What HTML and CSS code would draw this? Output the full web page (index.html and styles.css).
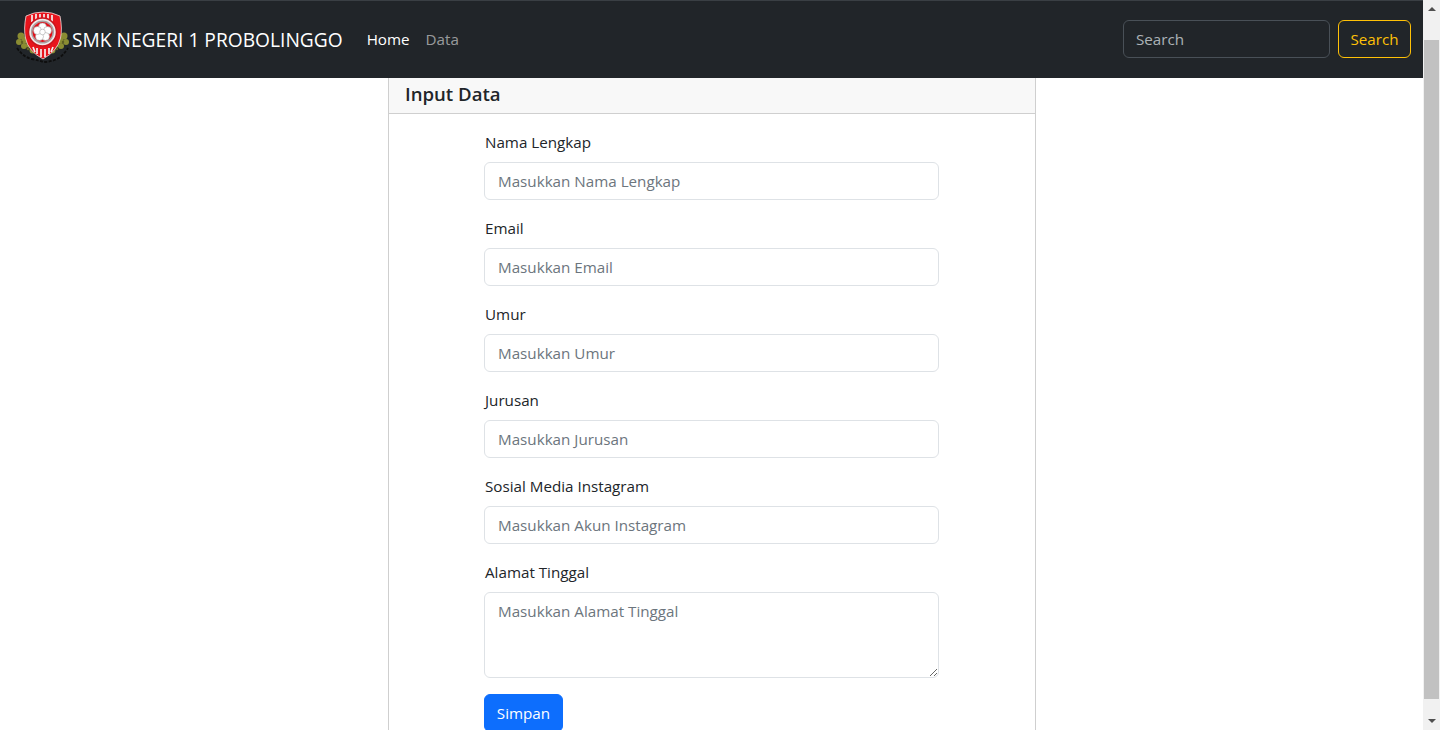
FILE: index.html
```html
<!DOCTYPE html>
<html lang="id">
<head>
<meta charset="utf-8">
<title>SMK Negeri 1 Probolinggo</title>
<link rel="stylesheet" href="styles.css">
</head>
<body>
<div class="viewport">
  <div class="page">
    <nav class="navbar">
      <a class="brand" href="#">
        <svg class="logo" viewBox="0 0 58 60" width="58" height="60" aria-hidden="true">
          <g fill="#8a8c32">
            <circle cx="7" cy="27" r="3.500"/><circle cx="11" cy="31" r="3.500"/><circle cx="5" cy="33" r="3"/><circle cx="10" cy="37" r="3"/><circle cx="15" cy="36" r="2.800"/><circle cx="19" cy="41" r="3.500"/>
            <circle cx="50" cy="27" r="3.500"/><circle cx="46" cy="31" r="3.500"/><circle cx="52" cy="33" r="3"/><circle cx="47" cy="37" r="3"/><circle cx="42" cy="36" r="2.800"/><circle cx="38" cy="41" r="3.500"/>
          </g>
          <g fill="#5f6022">
            <circle cx="8" cy="33" r="1.200"/><circle cx="49" cy="33" r="1.200"/><circle cx="14" cy="40" r="1.300"/><circle cx="43" cy="40" r="1.300"/>
          </g>
          <path d="M3 39q6 9 15 11t11 3q8 0 14-3t11-11" fill="none" stroke="#0e0e0e" stroke-width="1.800" stroke-dasharray="3 1.500"/>
          <path d="M12 7Q20 3 29 3t17 4q2.500 13 .5 22-3 13-17.500 21Q14 42 11.500 29 9.500 20 12 7Z" fill="#e8141c" stroke="#f0dede" stroke-width=".8"/>
          <g stroke="#f4eeee" stroke-width="1.700">
            <path d="M18 6v7M22 5v6M26 5v5M30 5v5M34 5v6M38 6v7"/>
            <path d="M19 38l2 5M23 39v6M27 40v8M31 40v8M35 39v6M39 38l-2 5"/>
          </g>
          <circle cx="28.500" cy="23" r="14" fill="#f0eaea" stroke="#c9141c" stroke-width="1.500"/>
          <circle cx="28.500" cy="23" r="11.500" fill="#a8a0a0"/>
          <circle cx="28.500" cy="23" r="10" fill="#e3101a"/>
          <g fill="#fff" stroke="#9a9a9a" stroke-width=".5">
            <circle cx="28.500" cy="18" r="4"/><circle cx="33.500" cy="21.500" r="4"/><circle cx="31.500" cy="27.500" r="4"/><circle cx="25.500" cy="27.500" r="4"/><circle cx="23.500" cy="21.500" r="4"/><circle cx="28.500" cy="23" r="2.800"/>
          </g>
        </svg>
        <span class="brand-name">SMK NEGERI 1 PROBOLINGGO</span>
      </a>
      <ul class="nav">
        <li><a class="nav-link active" href="#">Home</a></li>
        <li><a class="nav-link" href="#">Data</a></li>
      </ul>
      <form class="search">
        <input class="search-input" type="search" placeholder="Search">
        <button class="search-btn" type="button">Search</button>
      </form>
    </nav>
    <main class="card">
      <h5 class="card-header">Input Data</h5>
      <form class="card-body">
        <div class="group"><label class="label">Nama Lengkap</label><input class="control" placeholder="Masukkan Nama Lengkap"></div>
        <div class="group"><label class="label">Email</label><input class="control" placeholder="Masukkan Email"></div>
        <div class="group"><label class="label">Umur</label><input class="control" placeholder="Masukkan Umur"></div>
        <div class="group"><label class="label">Jurusan</label><input class="control" placeholder="Masukkan Jurusan"></div>
        <div class="group"><label class="label">Sosial Media Instagram</label><input class="control" placeholder="Masukkan Akun Instagram"></div>
        <div class="group"><label class="label">Alamat Tinggal</label><textarea class="control area" placeholder="Masukkan Alamat Tinggal"></textarea></div>
        <button class="save" type="button">Simpan</button>
      </form>
    </main>
  </div>
  <div class="scrollbar" aria-hidden="true">
    <span class="arrow up"></span>
    <div class="track"><div class="thumb"></div></div>
    <span class="arrow down"></span>
  </div>
</div>
</body>
</html>
```
FILE: styles.css
```css
* { box-sizing: border-box; }
html, body { margin: 0; height: 730px; overflow: hidden; }
body {
  font-family: "Open Sans", "Noto Sans", "Liberation Sans", sans-serif;
  font-size: 15.2px;
  line-height: 24px;
  color: #212529;
  background: #fff;
}
a { text-decoration: none; }
.viewport { display: flex; width: 1440px; height: 730px; }
.page { width: 1423px; height: 730px; overflow: hidden; flex: none; }

.navbar {
  display: flex;
  align-items: center;
  height: 78px;
  padding: 0 12px 1px 14px;
  background: #212529;
  border-top: 1px solid #3a3f44;
}
.brand { display: flex; align-items: center; color: #fff; margin-right: 16px; }
.logo { display: block; flex: none; }
.brand-name { padding-top: 2px; font-size: 19.2px; white-space: nowrap; }
.nav { display: flex; list-style: none; margin: 0; padding: 0; }
.nav-link { display: block; padding: 0 8px; color: rgba(255,255,255,.55); }
.nav-link.active { color: #fff; }
.search { display: flex; gap: 8px; margin-left: auto; }
.search-input {
  width: 207px;
  height: 38px;
  padding: 0 12px;
  font: inherit;
  color: #fff;
  background: #212529;
  border: 1px solid #495057;
  border-radius: 6px;
}
.search-input::placeholder { color: rgba(222,226,230,.75); opacity: 1; }
.search-btn {
  width: 73px;
  height: 38px;
  padding: 0;
  font: inherit;
  color: #ffc107;
  background: transparent;
  border: 1px solid #ffc107;
  border-radius: 6px;
}

.card {
  width: 648px;
  margin-left: 388px;
  border: 1px solid #cfcfcf;
  border-width: 0 1px;
}
.card-header {
  height: 36px;
  margin: 0;
  padding: 0 16px;
  font-size: 18.6px;
  font-weight: 600;
  line-height: 31px;
  background: #f8f8f8;
  border-bottom: 1px solid #cfcfcf;
}
.card-body { padding: 16px 96px 0 95px; }
.group { margin-bottom: 16px; }
.label { display: block; height: 32px; padding-left: 1px; line-height: 24px; color: #212529; }
.control {
  display: block;
  width: 100%;
  height: 38px;
  padding: 6px 13px;
  font: inherit;
  color: #212529;
  background: #fff;
  border: 1px solid #dee2e6;
  border-radius: 6px;
}
.control::placeholder { color: #6c757d; opacity: 1; }
.area { height: 86px; resize: vertical; }
.save {
  display: block;
  width: 79px;
  height: 38px;
  padding: 0;
  font: inherit;
  color: #fff;
  background: #0d6efd;
  border: 1px solid #0d6efd;
  border-radius: 6px;
}

.scrollbar {
  display: flex;
  flex-direction: column;
  align-items: center;
  width: 17px;
  height: 730px;
  background: #f1f1f1;
  flex: none;
}
.arrow { display: block; flex: none; width: 0; height: 0; border-left: 4px solid transparent; border-right: 4px solid transparent; }
.arrow.up { margin-top: 7px; margin-bottom: 6px; border-bottom: 4px solid #505050; }
.arrow.down { margin-top: 6px; margin-bottom: 7px; border-top: 4px solid #505050; }
.track { flex: 1; width: 100%; padding: 23px 1px 0; }
.thumb { height: 659px; background: #c1c1c1; }
```
